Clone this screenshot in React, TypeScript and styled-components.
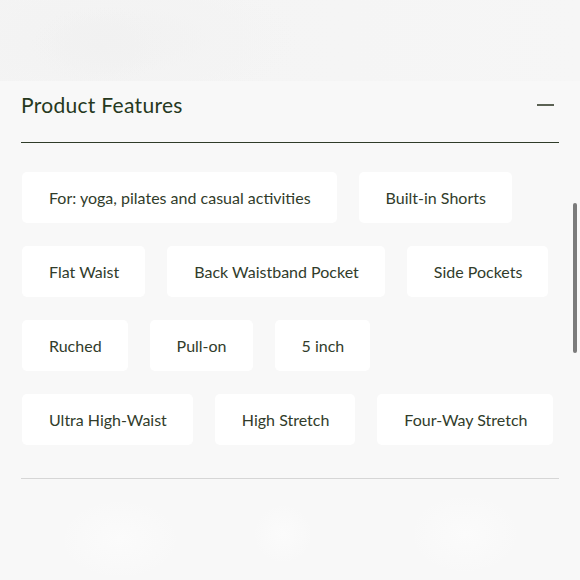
import React from "react";
import styled, { createGlobalStyle } from "styled-components";

const Global = createGlobalStyle`
  html, body { margin: 0; padding: 0; background: #f7f7f7; }
  body { font-family: Lato, "Liberation Sans", sans-serif; -webkit-font-smoothing: antialiased; }
  * { box-sizing: border-box; }
`;

const Page = styled.div`
  position: relative;
  width: 580px;
  height: 580px;
  overflow: hidden;
  background: #f8f8f8;
  display: flex;
  flex-direction: column;
`;

const TopBand = styled.div`
  height: 81px;
  flex: none;
  background:
    radial-gradient(ellipse 70px 40px at 100px 45px, #f1f1f1 0%, rgba(241,241,241,0) 100%),
    radial-gradient(ellipse 180px 70px at 120px 40px, #f2f2f2 0%, rgba(242,242,242,0) 100%),
    linear-gradient(90deg, #f4f4f4 0%, #f5f5f5 60%, #f6f6f6 100%);
`;

const Section = styled.section`
  padding: 0 21px;
  display: flex;
  flex-direction: column;
`;

const Header = styled.div`
  display: flex;
  align-items: center;
  justify-content: space-between;
  padding: 12px 5px 25px 0;
  border-bottom: 1.3px solid #2f3c29;
`;

const Title = styled.h2`
  margin: 0;
  font-size: 21px;
  line-height: 24px;
  font-weight: 400;
  color: #263820;
  letter-spacing: 0.3px;
`;

const Minus = styled.span`
  display: block;
  width: 17px;
  height: 2px;
  background: #5b6254;
`;

const Chips = styled.div`
  display: flex;
  flex-direction: column;
  gap: 23px;
  padding: 29px 0 33px 1px;
  border-bottom: 1px solid #d6d6d6;
`;

const Row = styled.div`
  display: flex;
  gap: 22px;
`;

const Chip = styled.div`
  height: 51px;
  padding: 0 26px 0 27px;
  display: flex;
  align-items: center;
  background: #ffffff;
  border-radius: 5px;
  font-size: 16px;
  color: #313c2b;
  white-space: nowrap;
`;

const BottomBand = styled.div`
  flex: 1;
  background:
    radial-gradient(ellipse 60px 40px at 120px 60px, #fbfbfb 0%, rgba(251,251,251,0) 100%),
    radial-gradient(ellipse 30px 30px at 283px 55px, #fbfbfb 0%, rgba(251,251,251,0) 100%),
    radial-gradient(ellipse 55px 40px at 465px 55px, #fbfbfb 0%, rgba(251,251,251,0) 100%),
    #f8f8f8;
`;

const Scrollbar = styled.div`
  position: absolute;
  left: 573px;
  top: 203px;
  width: 4px;
  height: 150px;
  border-radius: 2px;
  background: #7b7b7b;
`;

const rows: string[][] = [
  ["For: yoga, pilates and casual activities", "Built-in Shorts"],
  ["Flat Waist", "Back Waistband Pocket", "Side Pockets"],
  ["Ruched", "Pull-on", "5 inch"],
  ["Ultra High-Waist", "High Stretch", "Four-Way Stretch"],
];

export default function App() {
  return (
    <Page>
      <Global />
      <TopBand />
      <Section>
        <Header>
          <Title>Product Features</Title>
          <Minus />
        </Header>
        <Chips>
          {rows.map((r, i) => (
            <Row key={i}>
              {r.map((t) => (
                <Chip key={t}>{t}</Chip>
              ))}
            </Row>
          ))}
        </Chips>
      </Section>
      <BottomBand />
      <Scrollbar />
    </Page>
  );
}
